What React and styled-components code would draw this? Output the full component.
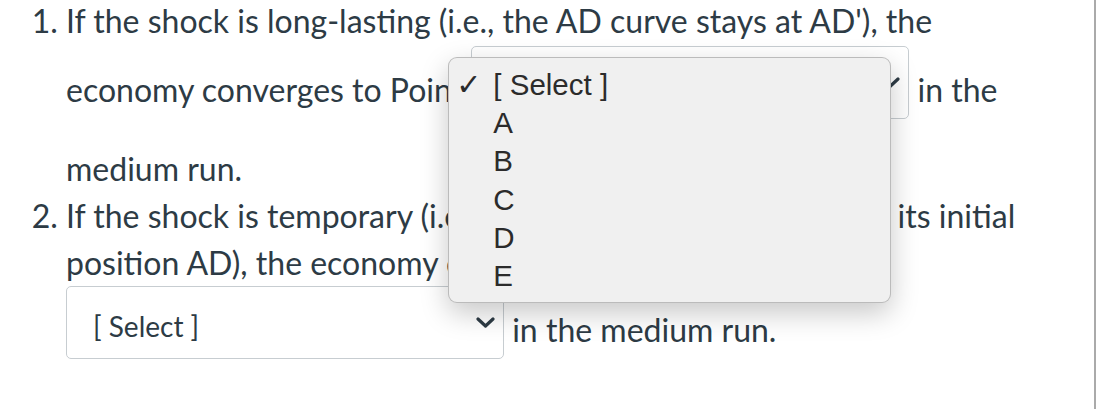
import React from 'react'
import styled, { createGlobalStyle } from 'styled-components'

const Reset = createGlobalStyle`
  html, body {
    margin: 0;
    padding: 0;
    background: #fff;
  }
  body {
    font-family: 'Lato', 'Noto Sans', sans-serif;
    color: #2d3b45;
  }
`

const Page = styled.div`
  box-sizing: border-box;
  width: 1096px;
  min-height: 100vh;
  border-right: 2px solid #aaa;
  padding-right: 50px;
`

const Questions = styled.ol`
  margin: -3px 0 0;
  padding: 0 0 0 66px;
  font-size: 32px;
  line-height: 47px;
`

const Question = styled.li`
  padding: 0;
`

const SelectBox = styled.span`
  position: relative;
  box-sizing: border-box;
  display: inline-flex;
  align-items: center;
  justify-content: space-between;
  width: 438px;
  height: 73px;
  padding: 6px 8px 0 26px;
  margin-top: ${p => p.$top}px;
  margin-bottom: 26px;
  border: 1px solid #c7cdd1;
  border-radius: 5px;
  background: #fff;
  font-size: 28px;
  line-height: 60px;
  vertical-align: 5px;
`

const Chevron = () => (
  <svg width="19" height="11" viewBox="0 0 19 11" fill="none" style={{ marginTop: -6 }}>
    <path d="M2 2l7.5 7 7.5-7" stroke="#2d3b45" strokeWidth="3.2" strokeLinecap="round" strokeLinejoin="round" />
  </svg>
)

const Menu = styled.div`
  position: absolute;
  left: -24px;
  top: 10px;
  box-sizing: border-box;
  width: 443px;
  height: 246px;
  padding: 8px 0 10px;
  background: #f0f0f0;
  border: 1px solid rgba(0, 0, 0, 0.22);
  border-radius: 9px;
  box-shadow: 0 10px 28px rgba(0, 0, 0, 0.22);
  font-family: 'Liberation Sans', Arial, sans-serif;
  font-size: 29.5px;
  line-height: 38.2px;
  color: #2b2b2b;
  z-index: 2;
`

const Option = styled.div`
  display: flex;
  align-items: center;
  height: 38.2px;
`

const Check = styled.span`
  flex: none;
  width: 44px;
  padding-left: 7px;
  box-sizing: border-box;
  font-family: 'DejaVu Sans', sans-serif;
  font-size: 30px;
  line-height: 1;
`

const options = ['[ Select ]', 'A', 'B', 'C', 'D', 'E']

const Select = ({ open, top = 2 }) => (
  <SelectBox $top={top}>
    <span>[ Select ]</span>
    <Chevron />
    {open && (
      <Menu>
        {options.map((o, i) => (
          <Option key={o}>
            <Check>{i === 0 ? '✓' : ''}</Check>
            {o}
          </Option>
        ))}
      </Menu>
    )}
  </SelectBox>
)

export default function App() {
  return (
    <>
      <Reset />
      <Page>
        <Questions>
          <Question>
            If the shock is long-lasting (i.e., the AD curve stays at AD'), the economy converges to Point{' '}
            <Select open /> in the medium run.
          </Question>
          <Question>
            If the shock is temporary (i.e., the AD curve returns back to its initial position AD), the economy converges to Point{' '}
            <Select top={0} /> in the medium run.
          </Question>
        </Questions>
      </Page>
    </>
  )
}
